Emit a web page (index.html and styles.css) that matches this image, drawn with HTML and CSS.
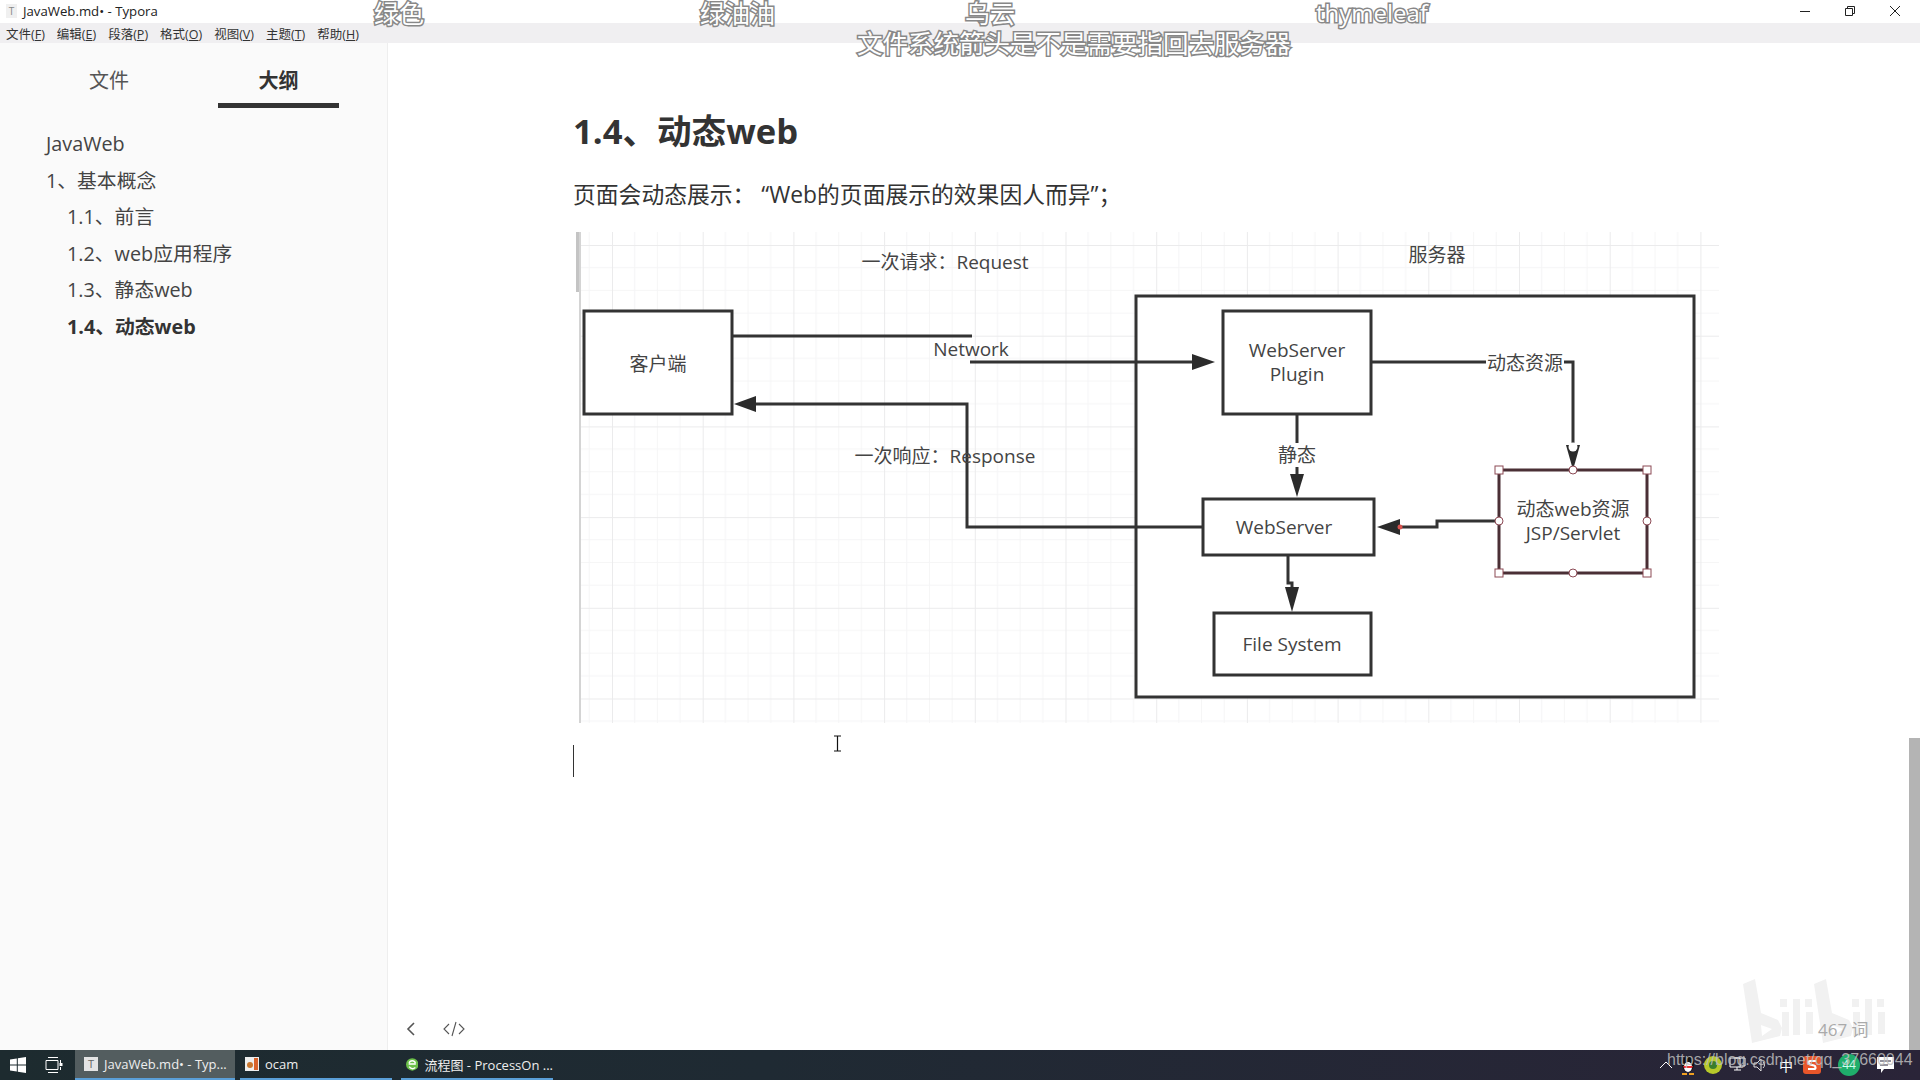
FILE: index.html
```html
<!DOCTYPE html>
<html lang="en">
<head>
    <meta charset="UTF-8">
    <title>JavaWeb.md - Typora</title>
    <link rel="stylesheet" href="styles.css">
</head>
<body>
    <div class="titlebar">
        <div class="app-icon">T</div>
        <span class="title-text">JavaWeb.md• - Typora</span>
        <div class="win-controls">
            <svg width="12" height="12" viewBox="0 0 12 12"><path d="M1 6.5h10" stroke="#222" fill="none"/></svg>
            <svg width="12" height="12" viewBox="0 0 12 12"><path d="M1.5 3.5h7v7h-7zM3.5 3.5v-2h7v7h-2" stroke="#222" fill="none"/></svg>
            <svg width="12" height="12" viewBox="0 0 12 12"><path d="M1 1l10 10M11 1L1 11" stroke="#222" fill="none"/></svg>
        </div>
    </div>

    <div class="menubar">
        <span>文件(<u>F</u>)</span>
        <span>编辑(<u>E</u>)</span>
        <span>段落(<u>P</u>)</span>
        <span>格式(<u>O</u>)</span>
        <span>视图(<u>V</u>)</span>
        <span>主题(<u>T</u>)</span>
        <span>帮助(<u>H</u>)</span>
    </div>

    <div class="main">
        <aside class="sidebar">
            <div class="tabs">
                <div class="tab">文件</div>
                <div class="tab active">大纲</div>
            </div>
            <ul class="outline">
                <li>JavaWeb</li>
                <li>1、基本概念</li>
                <li class="sub">1.1、前言</li>
                <li class="sub">1.2、web应用程序</li>
                <li class="sub">1.3、静态web</li>
                <li class="sub current">1.4、动态web</li>
            </ul>
        </aside>

        <div class="editor">
            <h2>1.4、动态web</h2>
            <p>页面会动态展示： “Web的页面展示的效果因人而异”；</p>

            <svg class="diagram" width="1143" height="491" viewBox="576 232 1143 491">
                <defs>
                    <pattern id="grid" x="612" y="245" width="90.7" height="90.7" patternUnits="userSpaceOnUse">
                        <path d="M22.7 0V90.7M45.4 0V90.7M68 0V90.7M0 22.7H90.7M0 45.4H90.7M0 68H90.7" stroke="#f5f5f6" stroke-width="1" fill="none"/>
                        <path d="M0 0V90.7M0 0H90.7" stroke="#ebebec" stroke-width="2" fill="none"/>
                    </pattern>
                </defs>
                <rect x="580" y="232" width="1139" height="491" fill="url(#grid)"/>
                <rect x="576" y="232" width="4" height="60" fill="#c4c4c4"/>
                <rect x="579" y="232" width="2" height="491" fill="#d4d4d4"/>

                <rect class="box" x="1136" y="296" width="558" height="401"/>
                <rect class="box" x="584" y="311" width="148" height="103"/>
                <rect class="box" x="1223" y="311" width="148" height="103"/>
                <rect class="box" x="1203" y="499" width="171" height="56"/>
                <rect class="box" x="1214" y="613" width="157" height="62"/>
                <rect class="box selected" x="1499" y="470" width="148" height="103"/>

                <!-- connectors -->
                <path class="line" d="M733 336H972"/>
                <path class="line" d="M970 362H1195"/>
                <path class="head" d="M1215 362L1192 354V370Z"/>
                <path class="line" d="M1203 527H967V404H755"/>
                <path class="head" d="M734 404L756 396V412Z"/>
                <path class="line" d="M1371 362H1573V445"/>
                <path class="head" d="M1573 470L1566 445H1580Z"/>
                <path class="line" d="M1297 414V480"/>
                <path class="head" d="M1297 497L1290 474H1304Z"/>
                <path class="line" d="M1499 521H1437V527H1398"/>
                <path class="head" d="M1377 527L1400 519V535Z"/>
                <path class="line" d="M1288 555V583H1292V592"/>
                <path class="head" d="M1292 612L1285 587H1299Z"/>
                <circle cx="1400" cy="527" r="2.5" fill="#d9534f"/>

                <!-- selection handles -->
                <circle class="handle round" cx="1573" cy="447" r="4.5"/>
                <rect class="handle" x="1495" y="466" width="8" height="8"/>
                <rect class="handle" x="1643" y="466" width="8" height="8"/>
                <rect class="handle" x="1495" y="569" width="8" height="8"/>
                <rect class="handle" x="1643" y="569" width="8" height="8"/>
                <circle class="handle" cx="1573" cy="470" r="4"/>
                <circle class="handle" cx="1573" cy="573" r="4"/>
                <circle class="handle" cx="1499" cy="521" r="4"/>
                <circle class="handle" cx="1647" cy="521" r="4"/>

                <text class="label" x="945" y="269" text-anchor="middle">一次请求：Request</text>
                <text class="label" x="1437" y="262" text-anchor="middle">服务器</text>
                <text class="label" x="658" y="371" text-anchor="middle">客户端</text>
                <text class="label" x="971" y="356" text-anchor="middle">Network</text>
                <text class="label" x="945" y="463" text-anchor="middle">一次响应：Response</text>
                <text class="label" x="1297" y="357" text-anchor="middle">WebServer</text>
                <text class="label" x="1297" y="381" text-anchor="middle">Plugin</text>
                <rect x="1486" y="352" width="78" height="22" fill="#fff"/>
                <text class="label" x="1525" y="370" text-anchor="middle">动态资源</text>
                <rect x="1278" y="443" width="38" height="24" fill="#fff"/>
                <text class="label" x="1297" y="462" text-anchor="middle">静态</text>
                <text class="label" x="1284" y="534" text-anchor="middle">WebServer</text>
                <text class="label" x="1292" y="651" text-anchor="middle">File System</text>
                <text class="label" x="1573" y="516" text-anchor="middle">动态web资源</text>
                <text class="label" x="1573" y="540" text-anchor="middle">JSP/Servlet</text>
            </svg>

            <div class="caret"></div>

            <div class="editor-foot">
                <svg width="12" height="16" viewBox="0 0 12 16"><path d="M9 2L3 8l6 6" stroke="#555" stroke-width="1.6" fill="none"/></svg>
                <svg width="22" height="16" viewBox="0 0 22 16"><path d="M6 3L1 8l5 5M16 3l5 5-5 5M13 1L9 15" stroke="#555" stroke-width="1.1" fill="none"/></svg>
            </div>

            <svg class="ibeam" width="9" height="17" viewBox="0 0 9 17"><path d="M1 1h7M1 16h7M4.5 1v15" stroke="#111" stroke-width="1.2" fill="none"/></svg>

            <svg class="bili-mark" width="170" height="80" viewBox="0 0 170 80">
                <path fill-rule="evenodd" d="M13 14L25 9L31 43L48 50L52 58L50 66L22 73ZM31 55L42 59L32 66Z"/>
                <rect x="50" y="29" width="7" height="8"/><rect x="52" y="42" width="7" height="24"/>
                <rect x="63" y="29" width="7" height="36"/>
                <rect x="75" y="29" width="7" height="8"/><rect x="76" y="42" width="7" height="22"/>
                <path fill-rule="evenodd" d="M84 14L96 9L102 43L119 50L123 58L121 66L93 73ZM102 55L113 59L103 66Z"/>
                <rect x="122" y="29" width="7" height="8"/><rect x="123" y="42" width="7" height="24"/>
                <rect x="135" y="29" width="7" height="36"/>
                <rect x="147" y="29" width="7" height="8"/><rect x="148" y="42" width="7" height="22"/>
            </svg>
            <div class="word-count">467 词</div>
        </div>

        <div class="scroll-thumb"></div>
    </div>

    <div class="taskbar">
        <div class="start">
            <svg width="16" height="16" viewBox="0 0 16 16"><path d="M0 2.5L6.8 1.5V7.5H0ZM7.8 1.3L16 0V7.5H7.8ZM0 8.5H6.8V14.5L0 13.5ZM7.8 8.5H16V16L7.8 14.7Z" fill="#fff"/></svg>
        </div>
        <div class="task-view">
            <svg width="18" height="16" viewBox="0 0 18 16"><path d="M3 .5h10M3 15.5h10M1 3.5h12v9H1zM15.5 3v3M15.5 10v3" stroke="#fff" fill="none"/><rect x="14.5" y="6" width="3" height="3" fill="#fff"/></svg>
        </div>
        <div class="task active">
            <span class="task-icon typora">T</span>
            <span>JavaWeb.md• - Typ...</span>
        </div>
        <div class="task">
            <svg class="task-svg" width="14" height="14" viewBox="0 0 14 14"><rect width="14" height="14" fill="#eee"/><rect x="9" y="1" width="4" height="12" fill="#d9622b"/><circle cx="5" cy="8" r="3" fill="#c9772f"/></svg>
            <span>ocam</span>
        </div>
        <div class="task">
            <svg class="task-svg" width="14" height="16" viewBox="0 0 14 16"><circle cx="7" cy="8.5" r="7" fill="#6cc04a"/><path d="M3 8h8M3.5 11c2 2.5 5 2.5 7 1M3.5 7c1-3.500 6-3.500 7 0" stroke="#fff" stroke-width="1.5" fill="none"/></svg>
            <span>流程图 - ProcessOn ...</span>
        </div>
        <div class="tray">
            <svg class="tray-up" width="14" height="8" viewBox="0 0 14 8"><path d="M1 7l6-6 6 6" stroke="#fff" fill="none"/></svg>
            <svg class="tray-qq" width="16" height="20" viewBox="0 0 16 20"><ellipse cx="8" cy="9" rx="6" ry="8" fill="#111"/><ellipse cx="8" cy="12" rx="4" ry="5" fill="#fff"/><path d="M3 11h10l-1 2H4z" fill="#e33"/><path d="M2 18h5v2H2zM9 18h5v2H9z" fill="#f0a020"/></svg>
            <svg class="tray-lime" width="18" height="18" viewBox="0 0 18 18"><circle cx="9" cy="9" r="9" fill="#b7c92a"/><circle cx="9" cy="9" r="4" fill="#3a7d2c"/></svg>
            <svg class="tray-pc" width="17" height="16" viewBox="0 0 17 16"><path d="M1 1h10v9H1zM5 1h11v8h-5M5 13h7M8 10v3" stroke="#fff" fill="none"/></svg>
            <svg class="tray-vol" width="14" height="14" viewBox="0 0 14 14"><path d="M1 5h3l4-4v12L4 9H1zM10 4c2 2 2 4 0 6" stroke="#ddd" fill="none"/></svg>
            <span class="tray-ime">中</span>
            <svg class="tray-sogou" width="18" height="18" viewBox="0 0 18 18"><rect width="18" height="18" rx="3" fill="#e8562a"/><path d="M13 5H7C5 5 5 8 7 8.500L11 9.500C13 10 13 13 11 13H5" stroke="#fff" stroke-width="2.200" fill="none"/></svg>
            <span class="tray-badge">44</span>
            <svg class="tray-note" width="17" height="16" viewBox="0 0 17 16"><path d="M0 0h17v12H7l-3 4v-4H0z" fill="#fff"/><path d="M3 4h11M3 8h8" stroke="#29243a"/></svg>
        </div>
    </div>

    <!-- text burned into the video -->
    <div class="danmaku dm-a">绿色</div>
    <div class="danmaku dm-b">绿油油</div>
    <div class="danmaku dm-c">乌云</div>
    <div class="danmaku dm-d">thymeleaf</div>
    <div class="danmaku dm-e">文件系统箭头是不是需要指回去服务器</div>
    <div class="blog-url">https://blog.csdn.net/qq_37660044</div>
</body>
</html>
```

FILE: styles.css
```css
html, body {
    margin: 0;
    padding: 0;
}

body {
    position: relative;
    width: 1920px;
    height: 1080px;
    overflow: hidden;
    display: flex;
    flex-direction: column;
    background-color: #fff;
    color: #333;
    font-family: "Open Sans", "Noto Sans CJK SC", sans-serif;
}

.titlebar {
    height: 23px;
    box-sizing: border-box;
    padding: 0 0 2px 6px;
    display: flex;
    align-items: center;
    background-color: #fff;
    font-size: 13.2px;
    color: #222;
}

.app-icon {
    width: 11px;
    height: 14px;
    margin-right: 6px;
    background-color: #f0f0f0;
    color: #888;
    font-size: 10px;
    line-height: 14px;
    text-align: center;
}

.win-controls {
    margin-left: auto;
    display: flex;
    gap: 33px;
    padding-right: 19px;
}

.menubar {
    height: 20px;
    display: flex;
    align-items: center;
    gap: 12px;
    padding-left: 6px;
    background-color: #f0eff1;
    font-size: 12.5px;
    color: #333;
}

.main {
    position: relative;
    flex: 1;
    display: flex;
    min-height: 0;
}

.sidebar {
    width: 388px;
    flex-shrink: 0;
    box-sizing: border-box;
    background-color: #fafafa;
    border-right: 1px solid #eee;
}

.tabs {
    display: flex;
    padding: 16px 0 0 60px;
    gap: 0;
}

.tab {
    width: 98px;
    margin-right: 60px;
    height: 49px;
    box-sizing: border-box;
    padding-top: 7px;
    font-size: 20px;
    line-height: 30px;
    text-align: center;
    color: #555;
}

.tab.active {
    width: 121px;
    margin-right: 0;
    border-bottom: 5px solid #333;
    font-weight: bold;
    color: #333;
}

.outline {
    list-style: none;
    margin: 18px 0 0;
    padding: 0 0 0 46px;
    font-size: 19.8px;
    line-height: 36.6px;
    color: #444;
}

.outline .sub {
    padding-left: 21px;
}

.outline .current {
    font-weight: bold;
    color: #333;
}

.editor {
    position: relative;
    flex: 1;
    padding-left: 185px;
}

.editor h2 {
    margin: 0;
    padding-top: 62px;
    font-size: 34.6px;
    line-height: 52px;
    font-weight: bold;
    color: #333;
}

.editor p {
    margin: 22px 0 0;
    font-size: 22.8px;
    line-height: 32px;
    color: #333;
}

.diagram {
    display: block;
    margin: 21px 0 0 3px;
}

.box {
    fill: #fff;
    stroke: #333;
    stroke-width: 3;
}

.box.selected {
    stroke: #4a2f35;
}

.line {
    fill: none;
    stroke: #333;
    stroke-width: 3;
}

.head {
    fill: #2b2b2b;
}

.handle {
    fill: #fff;
    stroke: #8c4a55;
    stroke-width: 1;
}

.handle.round {
    stroke: none;
}

.label {
    font-size: 19px;
    fill: #444;
}

.caret {
    width: 1px;
    height: 32px;
    margin-top: 22px;
    background-color: #333;
}

.editor-foot {
    position: absolute;
    left: 17px;
    bottom: 13px;
    display: flex;
    align-items: center;
    gap: 26px;
}

.ibeam {
    position: absolute;
    left: 445px;
    top: 692px;
}

.bili-mark {
    position: absolute;
    left: 1342px;
    top: 927px;
    fill: #f1f1f1;
}

.word-count {
    position: absolute;
    left: 1430px;
    top: 975px;
    font-size: 17px;
    line-height: 24px;
    color: #aaa;
}

.scroll-thumb {
    position: absolute;
    right: 0;
    bottom: 0;
    width: 11px;
    height: 312px;
    background-color: #b4b4b4;
}

.taskbar {
    height: 30px;
    display: flex;
    align-items: stretch;
    background: linear-gradient(to right, #1d2b2f, #1f2a33 40%, #2a2438);
    color: #eee;
    font-size: 13px;
}

.start {
    width: 36px;
    padding-left: 10px;
    box-sizing: border-box;
    display: flex;
    align-items: center;
}

.task-view {
    width: 39px;
    box-sizing: border-box;
    padding-left: 9px;
    display: flex;
    align-items: center;
}

.task {
    width: 152px;
    margin-right: 9px;
    box-sizing: border-box;
    padding-left: 5px;
    display: flex;
    align-items: center;
    gap: 6px;
    border-bottom: 2px solid #5a9fd8;
    white-space: nowrap;
}

.task.active {
    width: 160px;
    margin-right: 5px;
    padding-left: 9px;
    background-color: #535d5f;
}

.task-icon.typora {
    width: 14px;
    height: 14px;
    background-color: #e4e4e4;
    color: #666;
    font-size: 11px;
    line-height: 14px;
    text-align: center;
}

.tray {
    margin-left: auto;
    display: flex;
    align-items: center;
    padding-right: 26px;
}

.tray-up { margin-right: 7px; }
.tray-qq { margin-right: 8px; }
.tray-lime { margin-right: 7px; }
.tray-pc { margin-right: 7px; }
.tray-vol { margin-right: 12px; }
.tray-sogou { margin-right: 17px; }

.tray-ime {
    margin-right: 10px;
    font-size: 14px;
    color: #fff;
}

.tray-badge {
    width: 22px;
    height: 22px;
    margin-right: 17px;
    border-radius: 50%;
    background-color: #1fae6b;
    font-size: 12px;
    line-height: 22px;
    text-align: center;
    color: #cfe;
}

.danmaku {
    position: absolute;
    font-size: 25px;
    line-height: 26px;
    color: #fff;
    -webkit-text-stroke: 3px #888;
    paint-order: stroke fill;
    white-space: nowrap;
}

.dm-a { left: 374px; top: 0; }
.dm-b { left: 700px; top: 0; }
.dm-c { left: 965px; top: 0; }
.dm-d { left: 1316px; top: 0; font-size: 24px; }
.dm-e { left: 857px; top: 30px; font-size: 25.5px; }

.blog-url {
    position: absolute;
    left: 1667px;
    top: 1050px;
    font-family: "Liberation Sans", sans-serif;
    font-size: 16px;
    line-height: 20px;
    color: rgba(190, 190, 190, 0.85);
    white-space: nowrap;
}
```
